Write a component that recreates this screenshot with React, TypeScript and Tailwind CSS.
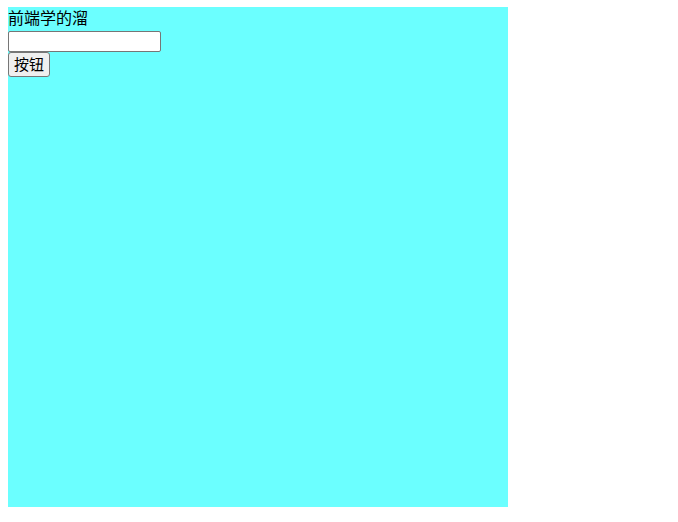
import React from 'react';

export default function App() {
  return (
    <div className="min-h-[522px] bg-white pl-2 pt-[7px]">
      <div className="w-[500px] h-[500px] bg-[#6bffff] font-['Liberation_Sans','Noto_Sans_CJK_SC',sans-serif] text-[16px] text-black">
        <div className="leading-[24px]">前端学的溜</div>
        <input type="text" className="block w-[153px] h-[21px] bg-white border border-[#767676] rounded-[2px] px-[2px] text-[13px]" />
        <button className="block w-[42px] h-[25px] bg-[#efefef] border border-[#767676] rounded-[3px] text-[15px] leading-none">
          按钮
        </button>
      </div>
    </div>
  );
}
